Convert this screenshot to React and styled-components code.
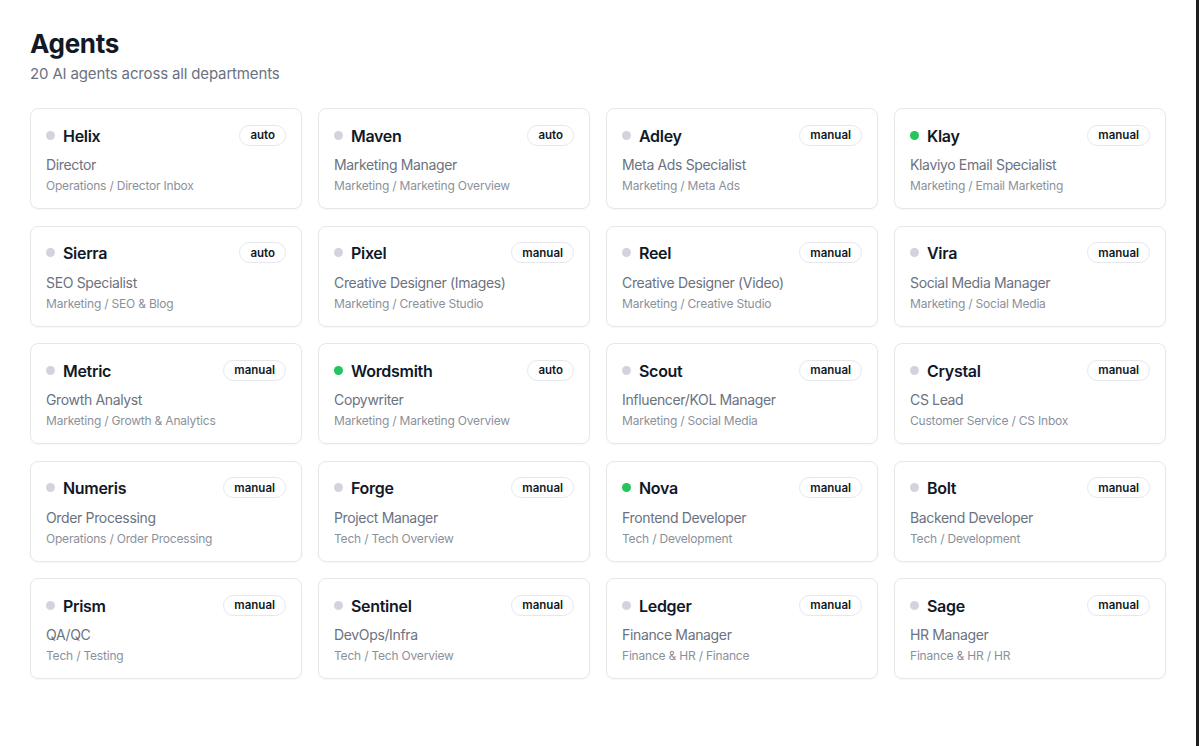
import styled, { createGlobalStyle } from "styled-components";

const GlobalStyle = createGlobalStyle`
  * { box-sizing: border-box; }
  body {
    margin: 0;
    background: #ffffff;
    font-family: "Inter", "Noto Sans", sans-serif;
    color: #111827;
  }
`;

const Page = styled.div`
  min-height: 746px;
  padding: 28px 30px 40px 30px;
  border-right: 3px solid #1f1f1f;
  margin-right: 1px;
`;

const Title = styled.h1`
  margin: 0;
  font-size: 26px;
  font-weight: 700;
  letter-spacing: -0.3px;
  line-height: 32px;
`;

const Subtitle = styled.p`
  margin: 4px 0 0;
  font-size: 15px;
  color: #6b7280;
  line-height: 20px;
  letter-spacing: -0.15px;
`;

const Grid = styled.div`
  margin-top: 24px;
  display: grid;
  grid-template-columns: repeat(4, 272px);
  column-gap: 16px;
  row-gap: 16.5px;
`;

const Card = styled.div`
  height: 101px;
  border: 1px solid #e5e7eb;
  border-radius: 8px;
  padding: 15px 15px 0 15px;
  box-shadow: 0 1px 2px rgba(0, 0, 0, 0.04);
`;

const Header = styled.div`
  display: flex;
  align-items: center;
  justify-content: space-between;
  height: 22px;
`;

const NameWrap = styled.div`
  display: flex;
  align-items: center;
  gap: 8px;
`;

const Dot = styled.span`
  width: 9px;
  height: 9px;
  border-radius: 50%;
  background: ${(p) => (p.$active ? "#22c55e" : "#d1d5db")};
`;

const Name = styled.span`
  font-size: 16px;
  font-weight: 600;
  color: #111827;
  margin-top: 1px;
  letter-spacing: -0.3px;
`;

const Badge = styled.span`
  height: 21px;
  padding: 0 10px;
  border: 1px solid #e5e7eb;
  border-radius: 999px;
  font-size: 11.5px;
  font-weight: 600;
  color: #111827;
  display: flex;
  align-items: center;
`;

const Role = styled.div`
  margin-top: 10px;
  font-size: 14px;
  color: #6b7280;
  line-height: 18px;
  letter-spacing: -0.35px;
`;

const Path = styled.div`
  margin-top: 4px;
  font-size: 12px;
  color: #8b919b;
  line-height: 16px;
  letter-spacing: -0.2px;
`;

const agents = [
  ["Helix", "auto", "Director", "Operations / Director Inbox", false],
  ["Maven", "auto", "Marketing Manager", "Marketing / Marketing Overview", false],
  ["Adley", "manual", "Meta Ads Specialist", "Marketing / Meta Ads", false],
  ["Klay", "manual", "Klaviyo Email Specialist", "Marketing / Email Marketing", true],
  ["Sierra", "auto", "SEO Specialist", "Marketing / SEO & Blog", false],
  ["Pixel", "manual", "Creative Designer (Images)", "Marketing / Creative Studio", false],
  ["Reel", "manual", "Creative Designer (Video)", "Marketing / Creative Studio", false],
  ["Vira", "manual", "Social Media Manager", "Marketing / Social Media", false],
  ["Metric", "manual", "Growth Analyst", "Marketing / Growth & Analytics", false],
  ["Wordsmith", "auto", "Copywriter", "Marketing / Marketing Overview", true],
  ["Scout", "manual", "Influencer/KOL Manager", "Marketing / Social Media", false],
  ["Crystal", "manual", "CS Lead", "Customer Service / CS Inbox", false],
  ["Numeris", "manual", "Order Processing", "Operations / Order Processing", false],
  ["Forge", "manual", "Project Manager", "Tech / Tech Overview", false],
  ["Nova", "manual", "Frontend Developer", "Tech / Development", true],
  ["Bolt", "manual", "Backend Developer", "Tech / Development", false],
  ["Prism", "manual", "QA/QC", "Tech / Testing", false],
  ["Sentinel", "manual", "DevOps/Infra", "Tech / Tech Overview", false],
  ["Ledger", "manual", "Finance Manager", "Finance & HR / Finance", false],
  ["Sage", "manual", "HR Manager", "Finance & HR / HR", false],
];

const App = () => {
  return (
    <>
      <GlobalStyle />
      <Page>
        <Title>Agents</Title>
        <Subtitle>20 AI agents across all departments</Subtitle>
        <Grid>
          {agents.map(([name, mode, role, path, active]) => (
            <Card key={name}>
              <Header>
                <NameWrap>
                  <Dot $active={active} />
                  <Name>{name}</Name>
                </NameWrap>
                <Badge>{mode}</Badge>
              </Header>
              <Role>{role}</Role>
              <Path>{path}</Path>
            </Card>
          ))}
        </Grid>
      </Page>
    </>
  );
};

export default App;
